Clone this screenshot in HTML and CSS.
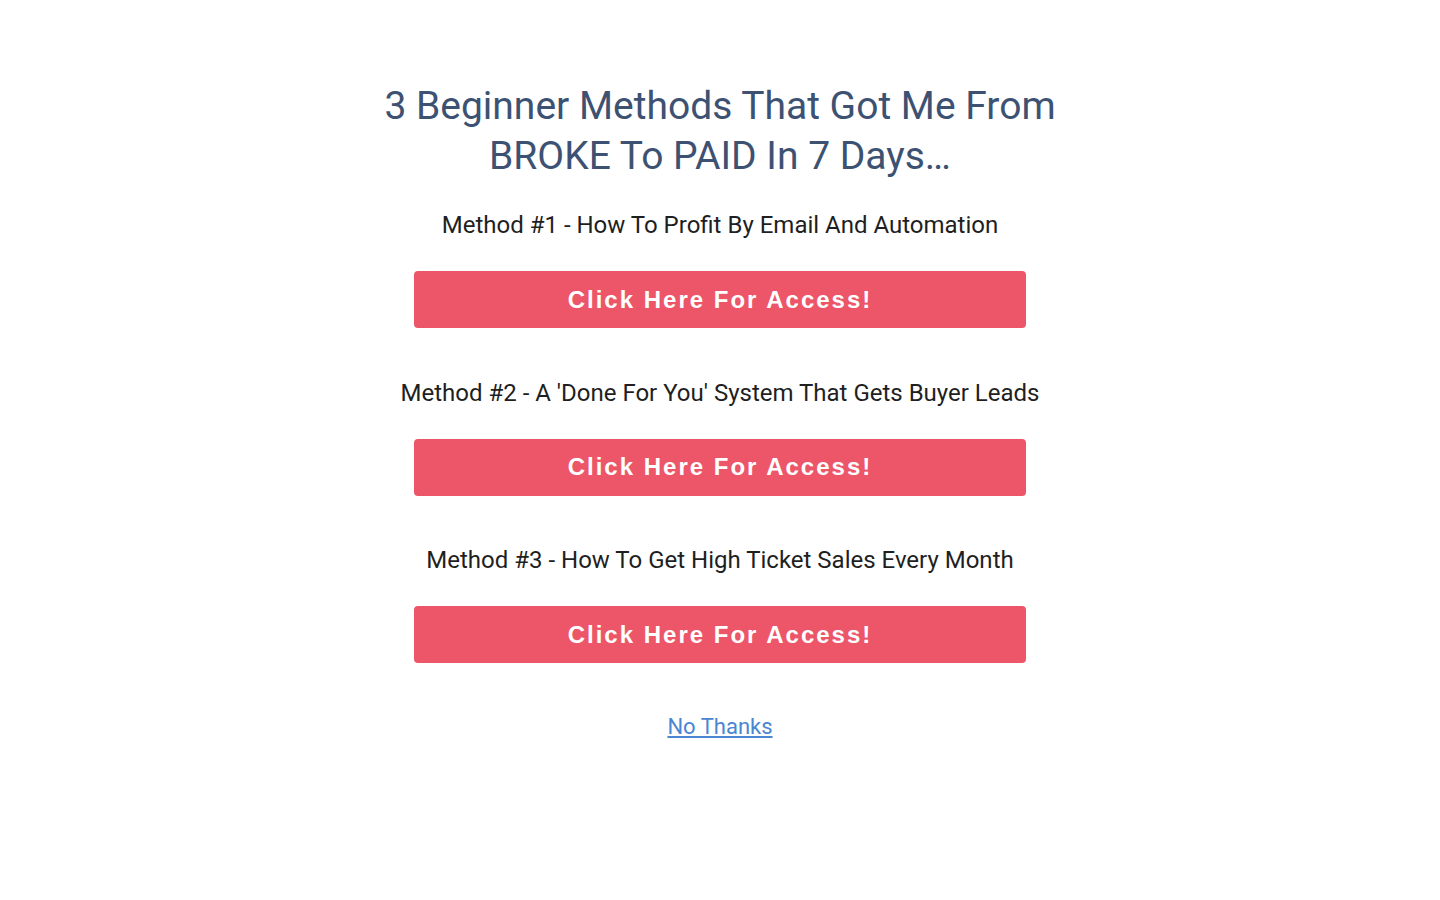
FILE: index.html
```html
<!DOCTYPE html>
<html lang="en">
<head>
<meta charset="utf-8">
<title>3 Beginner Methods</title>
<link rel="stylesheet" href="styles.css">
</head>
<body>
<main class="page">
  <h1 class="headline">3 Beginner Methods That Got Me From<br>BROKE To PAID In 7 Days…</h1>

  <section class="method">
    <p class="method-title">Method #1 - How To Profit By Email And Automation</p>
    <a class="access-btn" href="#">Click Here For Access!</a>
  </section>

  <section class="method">
    <p class="method-title">Method #2 - A 'Done For You' System That Gets Buyer Leads</p>
    <a class="access-btn" href="#">Click Here For Access!</a>
  </section>

  <section class="method">
    <p class="method-title">Method #3 - How To Get High Ticket Sales Every Month</p>
    <a class="access-btn" href="#">Click Here For Access!</a>
  </section>

  <a class="decline" href="#">No Thanks</a>
</main>
</body>
</html>
```

FILE: styles.css
```css
html, body {
  margin: 0;
  padding: 0;
  background: #ffffff;
}

body {
  font-family: Roboto, "Liberation Sans", Arial, sans-serif;
}

.page {
  display: flex;
  flex-direction: column;
  align-items: center;
  padding-top: 81px;
}

.headline {
  margin: 0;
  font-size: 39px;
  font-weight: 400;
  line-height: 50px;
  color: #3d5272;
  text-align: center;
}

.method {
  display: flex;
  flex-direction: column;
  align-items: center;
}

.method-title {
  margin: 0;
  font-size: 24px;
  line-height: 30px;
  color: #1f1f1f;
  text-align: center;
}

.headline + .method {
  margin-top: 29px;
}

.method + .method {
  margin-top: 49.5px;
}

.access-btn {
  display: flex;
  align-items: center;
  justify-content: center;
  width: 612px;
  height: 57px;
  margin-top: 31px;
  background: #ec5668;
  border-radius: 4px;
  color: #ffffff;
  text-decoration: none;
  font-family: "Liberation Sans", Arial, sans-serif;
  font-weight: 700;
  font-size: 24px;
  letter-spacing: 2px;
}

.decline {
  margin-top: 49px;
  font-size: 22px;
  line-height: 30px;
  color: #4a86d2;
  text-decoration: underline;
}
```
